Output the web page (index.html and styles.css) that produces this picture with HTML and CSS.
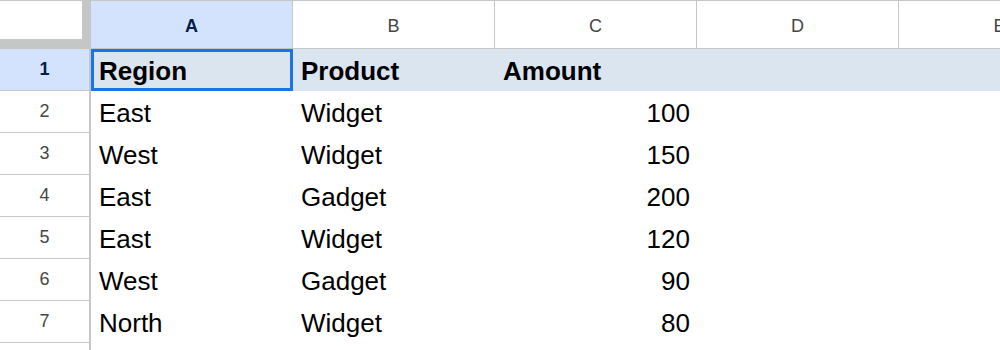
FILE: index.html
```html
<!DOCTYPE html>
<html lang="en">
<head>
<meta charset="utf-8">
<title>Sheet</title>
<link rel="stylesheet" href="styles.css">
</head>
<body>
<div class="sheet">
  <div class="corner"><div class="corner-box"></div></div>
  <div class="colhead sel">A</div>
  <div class="colhead">B</div>
  <div class="colhead">C</div>
  <div class="colhead">D</div>
  <div class="colhead">E</div>

  <div class="rowhead sel">1</div>
  <div class="cell hdr active">Region</div>
  <div class="cell hdr">Product</div>
  <div class="cell hdr">Amount</div>
  <div class="cell hdr"></div>
  <div class="cell hdr"></div>

  <div class="rowhead">2</div>
  <div class="cell">East</div>
  <div class="cell">Widget</div>
  <div class="cell num">100</div>
  <div class="cell"></div>
  <div class="cell"></div>

  <div class="rowhead">3</div>
  <div class="cell">West</div>
  <div class="cell">Widget</div>
  <div class="cell num">150</div>
  <div class="cell"></div>
  <div class="cell"></div>

  <div class="rowhead">4</div>
  <div class="cell">East</div>
  <div class="cell">Gadget</div>
  <div class="cell num">200</div>
  <div class="cell"></div>
  <div class="cell"></div>

  <div class="rowhead">5</div>
  <div class="cell">East</div>
  <div class="cell">Widget</div>
  <div class="cell num">120</div>
  <div class="cell"></div>
  <div class="cell"></div>

  <div class="rowhead">6</div>
  <div class="cell">West</div>
  <div class="cell">Gadget</div>
  <div class="cell num">90</div>
  <div class="cell"></div>
  <div class="cell"></div>

  <div class="rowhead">7</div>
  <div class="cell">North</div>
  <div class="cell">Widget</div>
  <div class="cell num">80</div>
  <div class="cell"></div>
  <div class="cell"></div>

  <div class="rowhead"></div>
  <div class="cell"></div>
  <div class="cell"></div>
  <div class="cell"></div>
  <div class="cell"></div>
  <div class="cell"></div>
</div>
</body>
</html>
```

FILE: styles.css
```css
* { box-sizing: border-box; }

html, body {
  margin: 0;
  padding: 0;
  background: #ffffff;
}

body {
  width: 1000px;
  height: 350px;
  overflow: hidden;
  font-family: "Liberation Sans", Arial, sans-serif;
}

.sheet {
  display: grid;
  grid-template-columns: 91px repeat(5, 202px);
  grid-template-rows: 49px repeat(8, 42px);
  width: 1000px;
  height: 350px;
  overflow: hidden;
}

.corner {
  background: #c4c7c5;
  border-top: 1px solid #c4c7c5;
  padding: 0 9px 10px 0;
}

.corner-box {
  width: 100%;
  height: 100%;
  background: #ffffff;
}

.colhead {
  display: flex;
  align-items: center;
  justify-content: center;
  padding-top: 3px;
  border-top: 1px solid #c4c7c5;
  border-bottom: 1px solid #c4c7c5;
  border-right: 1px solid #c4c7c5;
  font-size: 18px;
  color: #444746;
  background: #ffffff;
}

.colhead.sel,
.rowhead.sel {
  background: #d3e3fd;
  color: #041e49;
  font-weight: bold;
}

.rowhead {
  display: flex;
  align-items: center;
  justify-content: center;
  border-right: 2px solid #c4c7c5;
  border-bottom: 1px solid #c4c7c5;
  font-size: 18px;
  color: #444746;
  background: #ffffff;
}

.cell {
  display: flex;
  align-items: flex-end;
  padding: 0 7px 4px 8px;
  font-size: 26px;
  color: #000000;
  white-space: nowrap;
  overflow: hidden;
}

.cell.hdr {
  background: #dbe5f0;
  font-weight: bold;
}

.cell.num {
  justify-content: flex-end;
}

.cell.active {
  outline: 3px solid #1a73e8;
  outline-offset: -3px;
}
```
